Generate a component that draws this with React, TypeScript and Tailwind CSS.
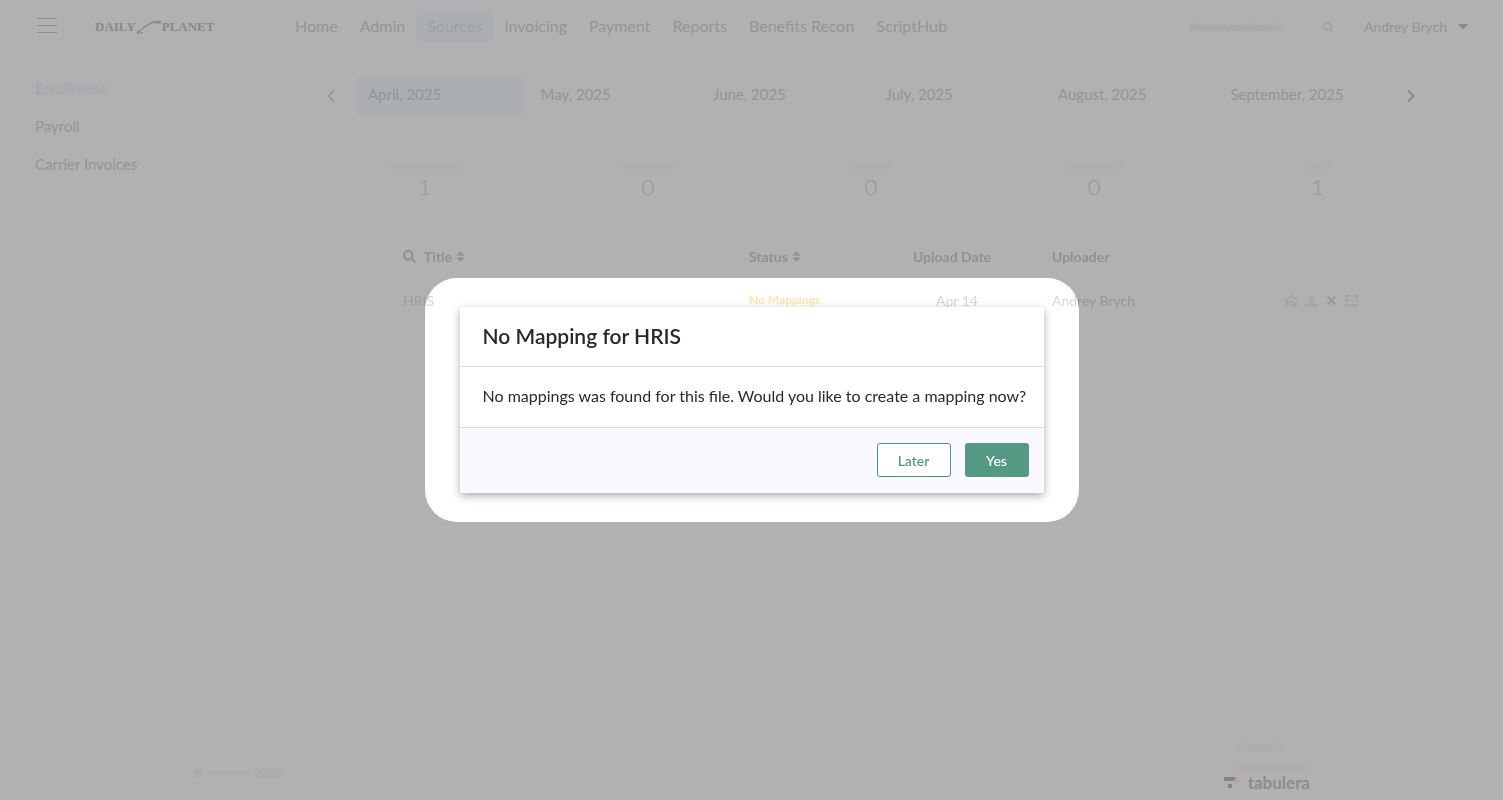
import type { ReactNode } from 'react';
import { FaCaretDown, FaSearch, FaSort } from 'react-icons/fa';
import { ChevronLeft, ChevronRight } from 'lucide-react';
import clsx from 'clsx';

const navItems = ['Home', 'Admin', 'Sources', 'Invoicing', 'Payment', 'Reports', 'Benefits Recon', 'ScriptHub'];

const months = ['April, 2025', 'May, 2025', 'June, 2025', 'July, 2025', 'August, 2025', 'September, 2025'];

const stats = [
  { value: 1, bar: 'w-[70px]' },
  { value: 0, bar: 'w-[52px]' },
  { value: 0, bar: 'w-9' },
  { value: 0, bar: 'w-[52px]' },
  { value: 1, bar: 'w-5' },
];

function Logo() {
  return (
    <a href="#" className="flex w-[121px] items-center font-['Liberation_Serif',serif] text-[13px] font-bold text-[#8b898c]">
      DAILY
      <svg viewBox="0 0 26 18" className="h-[18px] w-[26px] shrink-0" fill="none" stroke="currentColor">
        <path d="M1 15.5C7 10 12 5 18 4.500L25 5" strokeWidth="1.200" />
        <path d="M14 5.500C17 2.500 21 2.500 25 3L24 5.500C20 4 17 5 14 5.500Z" fill="currentColor" strokeWidth="0.3" />
        <path d="M1 15.500l6-1M1 15.500l2-4" strokeWidth="1" />
      </svg>
      PLANET
    </a>
  );
}

function Header() {
  return (
    <header className="flex h-[54px] items-center pr-8 pl-[37px] text-[#969497]">
      <button aria-label="Menu" className="mr-[38px] flex h-5 w-5 flex-col justify-center gap-[6px] pb-1">
        <span className="h-px shrink-0 bg-[#8d8b8e]" />
        <span className="h-px shrink-0 bg-[#8d8b8e]" />
        <span className="h-px shrink-0 bg-[#8d8b8e]" />
      </button>
      <Logo />
      <nav className="ml-[68px] flex items-center pb-[2px] text-[16px]">
        {navItems.map((item) => (
          <a
            key={item}
            href="#"
            className={clsx(
              'rounded-[4px] px-[11px] py-1 leading-6 whitespace-nowrap',
              item === 'Sources' && 'bg-[#abafb1] text-[#9ca1a3]',
            )}
          >
            {item}
          </a>
        ))}
      </nav>
      <label className="ml-auto flex items-center text-[#a5a3a6]">
        <input
          aria-label="Search"
          placeholder="Hmmmmmismmic"
          className="w-[134px] bg-transparent text-[12px] blur-[1px] placeholder:text-[#a09ea1]"
        />
        <FaSearch size={11} />
      </label>
      <button className="ml-[30px] flex items-center gap-2 pb-[2px] text-[14px] whitespace-nowrap">
        Andrey Brych
        <FaCaretDown size={16} className="text-[#8b898c]" />
      </button>
    </header>
  );
}

function ActionButton({ label, children }: { label: string; children: ReactNode }) {
  return (
    <button aria-label={label} className="flex h-4 w-4 items-center justify-center">
      <svg viewBox="0 0 16 16" className="h-[15px] w-[15px]" fill="none" stroke="currentColor" strokeWidth="2">
        {children}
      </svg>
    </button>
  );
}

function FilesTable() {
  return (
    <div className="relative z-20 mt-10 ml-[90px]">
      <table className="w-full table-fixed text-left text-[14px] text-black/17">
        <thead>
          <tr className="h-[30px] font-bold text-[#929093]">
            <th className="w-[346px]">
              <span className="flex items-center">
                <FaSearch size={13} className="mr-2" />
                Title
                <FaSort size={13} className="ml-[2px]" />
              </span>
            </th>
            <th className="w-[143px]">
              <span className="flex items-center">
                Status
                <FaSort size={13} className="ml-[2px]" />
              </span>
            </th>
            <th className="w-[120px] text-center">Upload Date</th>
            <th className="w-[271px] pl-10">Uploader</th>
            <th aria-label="Actions" />
          </tr>
        </thead>
        <tbody>
          <tr className="h-[58px]">
            <td>
              <a href="#" className="text-[#4a7f77]/30">HRIS</a>
            </td>
            <td className="text-[12px] font-bold text-[#ffd27a]/60">No Mappings</td>
            <td className="pl-[10px] text-center">Apr 14</td>
            <td className="pl-10">Andrey Brych</td>
            <td>
              <span className="flex gap-1 text-[#a0a4a6]">
                <ActionButton label="Preview">
                  <path d="M3 14V7l5-4 5 4M3 10h4M7 8l6 6M6 13h7V9" />
                </ActionButton>
                <ActionButton label="Upload">
                  <path d="M1 13h14M8 3v8M5 10h6M6 6h4" />
                </ActionButton>
                <ActionButton label="Delete">
                  <path d="M4 4l8 8M12 4l-8 8" stroke="#959799" />
                </ActionButton>
                <ActionButton label="Mapping">
                  <path d="M1 3h14M1 8h4M7 8h3M12 8h3M1 13h14M2 3v5M14 3v5" />
                </ActionButton>
              </span>
            </td>
          </tr>
        </tbody>
      </table>
    </div>
  );
}

function MappingDialog() {
  return (
    <div className="fixed inset-0 z-30 flex items-center justify-center">
      <section
        role="dialog"
        aria-labelledby="dialog-title"
        className="w-[584px] overflow-hidden rounded-[3px] bg-white text-[#2a282c] shadow-[0_3px_8px_rgba(60,50,65,0.4)]"
      >
        <h2 id="dialog-title" className="border-b border-[#dcdbde] px-[23px] pt-[14px] pb-4 text-[21px] leading-[29px] font-semibold">
          No Mapping for HRIS
        </h2>
        <p className="border-b border-[#dcdbde] px-[23px] pt-[17px] pb-[19px] text-[16px] leading-6 whitespace-nowrap">
          No mappings was found for this file. Would you like to create a mapping now?
        </p>
        <div className="flex justify-end gap-[14px] bg-[#faf9fe] px-[15px] pt-[15px] pb-4 text-[14px] font-medium">
          <button className="h-[34px] w-[74px] rounded-[3px] border border-[#4c9480] bg-white text-[#4c9480]">
            Later
          </button>
          <button className="h-[34px] w-16 rounded-[3px] bg-[#549983] text-white">Yes</button>
        </div>
      </section>
    </div>
  );
}

export default function App() {
  return (
    <div className="flex min-h-screen flex-col bg-[#b2b0b3] font-[Lato,sans-serif] text-[#969497]">
      <Header />
      <div className="flex grow">
        <aside className="w-[313px] shrink-0 pt-[15px] pl-[35px] text-[15px] leading-[38px]">
          <a href="#" className="block text-[#9ca7a8] blur-[1px]">Enrollment</a>
          <a href="#" className="block">Payroll</a>
          <a href="#" className="block">Carrier Invoices</a>
        </aside>
        <main className="grow pt-[22px] pr-[74px]">
          <div className="flex h-10 items-center">
            <button aria-label="Previous months" className="mr-[9px] flex w-9 justify-center">
              <ChevronLeft size={20} />
            </button>
            <div className="grid grow grid-cols-6 text-[15px]">
              {months.map((month, index) => (
                <button
                  key={month}
                  className={clsx(
                    'mr-2 h-10 px-[10px] pb-1 text-left whitespace-nowrap',
                    index === 0 && 'rounded-[3px] bg-[#abafb1]',
                  )}
                >
                  {month}
                </button>
              ))}
            </div>
            <button aria-label="Next months" className="flex w-9 justify-center text-[#807e81]">
              <ChevronRight size={20} />
            </button>
          </div>
          <div className="mt-12 grid grid-cols-5">
            {stats.map((stat, index) => (
              <div key={index} className="flex flex-col items-center">
                <span className={clsx('h-1 bg-[#abaaac] blur-[2px]', stat.bar)} />
                <span className="mt-[5px] text-[22px] leading-7 font-light">{stat.value}</span>
              </div>
            ))}
          </div>
          <FilesTable />
        </main>
      </div>
      <footer className="flex items-end justify-between pr-[193px] pb-[7px] pl-[194px]">
        <p className="flex items-center gap-1 pb-3 text-[12px] leading-4 text-[#a5a3a6] blur-[1px]">
          © <span className="h-1 w-[42px] bg-[#abaaac]" /> 2025
        </p>
        <div className="flex flex-col items-end">
          <span className="mr-[30px] h-1 w-10 bg-[#adabae] blur-[2px]" />
          <span className="mt-4 h-1 w-[74px] bg-[#abaaac] blur-[2px]" />
          <a href="#" className="mt-1 flex items-center gap-2 text-[17px] leading-5 font-bold text-[#8d8b8e]">
            <svg viewBox="0 0 16 14" className="h-[14px] w-4">
              <path d="M0 1h12v4H0zM4 8h4v4H4z" fill="#858386" />
              <path d="M12 1l4 4-4 3-3-3z" fill="#b9a0a5" />
            </svg>
            tabulera
          </a>
        </div>
      </footer>

      {/* spotlight behind the dialog, below the table row */}
      <div className="pointer-events-none fixed inset-0 z-10 flex items-center justify-center">
        <div className="h-[244px] w-[654px] rounded-[32px] bg-white" />
      </div>
      <MappingDialog />
    </div>
  );
}
